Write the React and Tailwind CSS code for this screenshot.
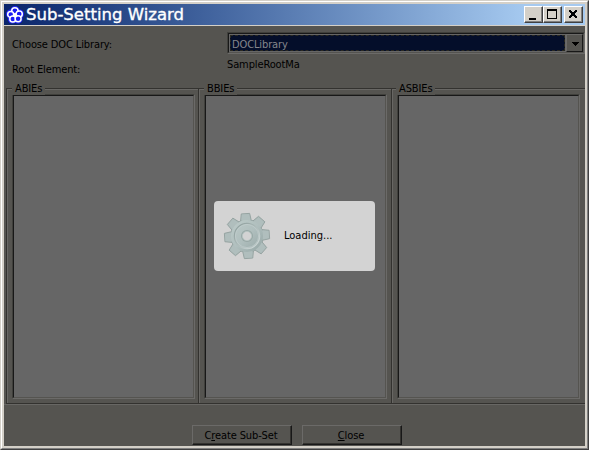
import React from "react";

function AppIcon() {
  return (
    <svg width="18" height="18" viewBox="0 0 18 18" className="shrink-0">
      <g fill="#2424ff">
        <circle cx="9" cy="4.8" r="4.8" />
        <circle cx="4.6" cy="8" r="4.6" />
        <circle cx="13.4" cy="8" r="4.6" />
        <circle cx="6.4" cy="13" r="4.6" />
        <circle cx="12" cy="13" r="4.6" />
      </g>
      <g fill="#1a1af4" stroke="#fff" strokeWidth="1.5">
        <circle cx="8.9" cy="4.9" r="3.2" />
        <circle cx="4.7" cy="8.4" r="3" />
        <circle cx="13.2" cy="8" r="3.1" />
        <circle cx="6.8" cy="12.9" r="3" />
        <circle cx="12.1" cy="12.7" r="3" />
      </g>
      <path d="M7.4 7.6l3 3M10.6 7.6l-3 3" stroke="#fff" strokeWidth="1.5" />
    </svg>
  );
}

function TitleButton({ children, className = "" }) {
  return (
    <div
      className={
        "h-[17px] border border-t-white border-l-white border-r-[#404040] border-b-[#404040] bg-[#d4d0c8] shadow-[inset_-1px_-1px_0_#808080] " +
        className
      }
    >
      <svg width="17" height="15" viewBox="0 0 17 15" shapeRendering="crispEdges">
        {children}
      </svg>
    </div>
  );
}

function Group({ label, className, labelClass = "left-[5px]" }) {
  return (
    <fieldset className={"relative h-[316px] border-l border-t border-b border-[#33322f] " + className}>
      <div className="h-full border-t border-l border-[#686764] pl-[4px] pt-[4px]">
        <div className="h-[305px] w-[183px] border border-t-[#40403c] border-l-[#40403c] border-r-[#6b6a68] border-b-[#6b6a68]">
          <div className="h-full border border-t-[#181818] border-l-[#181818] border-r-[#555450] border-b-[#555450] bg-[#666]" />
        </div>
      </div>
      <span className={"absolute top-[-7px] bg-[#555450] px-[3px] leading-[13px] " + labelClass}>{label}</span>
    </fieldset>
  );
}

function PushButton({ children }) {
  return (
    <div className="h-[20px] w-[100px] border border-t-[#6b6a68] border-l-[#6b6a68] border-r-[#181818] border-b-[#181818] pr-[2px] text-center leading-[19px] shadow-[inset_-1px_-1px_0_#33322f]">
      {children}
    </div>
  );
}

const TEETH = [-4, 41, 86, 131, 176, 221, 266, 311];

function Gear() {
  return (
    <svg width="48" height="48" viewBox="-24 -24 48 48" className="shrink-0">
      <defs>
        <linearGradient id="metal" x1="0" y1="0" x2="1" y2="1">
          <stop offset="0" stopColor="#bdcbc9" />
          <stop offset="0.5" stopColor="#b0bfbe" />
          <stop offset="1" stopColor="#94a5a4" />
        </linearGradient>
        <linearGradient id="ring" x1="0" y1="0" x2="1" y2="1">
          <stop offset="0" stopColor="#879896" />
          <stop offset="1" stopColor="#d5dfde" />
        </linearGradient>
      </defs>
      <g fill="#a9b7b6" stroke="#93a19f" strokeWidth="0.9">
        {TEETH.map((a) => (
          <path key={a} transform={`rotate(${a})`} d="M-5.4 -15L-4.2 -22.4H4.2L5.4 -15Z" />
        ))}
        <circle r="16.4" />
      </g>
      <g fill="#b0bebd">
        {TEETH.map((a) => (
          <path key={a} transform={`rotate(${a})`} d="M-4.8 -14L-3.6 -21.8H3.6L4.8 -14Z" />
        ))}
      </g>
      <circle r="16" fill="url(#metal)" />
      <circle r="12.6" fill="none" stroke="url(#ring)" strokeWidth="1.3" />
      <circle r="11.6" fill="none" stroke="#c3cfce" strokeWidth="0.7" />
      <circle r="6" fill="#98a8a6" />
      <circle r="4.6" fill="#d3d3d3" stroke="#b9c6c4" strokeWidth="0.8" />
    </svg>
  );
}

export default function App() {
  return (
    <div className="relative h-[450px] w-[589px] overflow-hidden border border-t-[#d4d0c8] border-l-[#d4d0c8] border-r-[#404040] border-b-[#404040] font-['DejaVu_Sans_Condensed','DejaVu_Sans',sans-serif] text-[11px] tracking-[-0.12px] text-black">
      <div className="h-full border border-t-white border-l-white border-r-[#808080] border-b-[#808080]">
        <div className="flex h-full flex-col border-2 border-[#d4d0c8] bg-[#555450]">
          <header className="flex h-[22px] shrink-0 items-center border-b border-[#d4d0c8] bg-linear-to-r from-[#0a246a] to-[#a6caf0] to-90% pl-[2px] pr-[2px]">
            <AppIcon />
            <h1 className="ml-[2px] flex-1 whitespace-nowrap pt-px font-['DejaVu_Sans',sans-serif] text-[16.5px] leading-[20px] tracking-normal text-white [-webkit-text-stroke:0.35px_white]">Sub-Setting Wizard</h1>
            <TitleButton className="w-[19px]">
              <path d="M4 11h7v2H4z" />
            </TitleButton>
            <TitleButton className="w-[19px]">
              <path fillRule="evenodd" d="M3 2h10v10H3zM4 4v7h8V4z" />
            </TitleButton>
            <TitleButton className="ml-[2px] w-[19px]">
              <path d="M4 3h2v1h-2zM10 3h2v1h-2zM4 4h3v1H4zM9 4h3v1H9zM5 5h6v1H5zM6 6h4v2H6zM5 8h6v1H5zM4 9h3v1H4zM9 9h3v1H9zM4 10h2v1H4zM10 10h2v1h-2z" />
            </TitleButton>
          </header>
          <div className="flex h-[62px] shrink-0 pl-2 leading-[13px]">
            <div className="w-[215px] shrink-0 pt-3">
              <div>Choose DOC Library:</div>
              <div className="mt-3">Root Element:</div>
            </div>
            <div className="flex-1 pt-[6px]">
              <div className="flex h-[22px] border border-t-[#40403c] border-l-[#40403c] border-r-[#6b6a68] border-b-[#6b6a68]">
                <div className="flex flex-1 border border-t-[#181818] border-l-[#181818] border-r-[#555450] border-b-[#555450] bg-[#666] p-px">
                  <div className="flex-1 border border-dashed border-[#292820] bg-[#040e2a] pl-px leading-[17px] text-[#85868c]">DOCLibrary</div>
                  <div className="-my-px -mr-px ml-px flex w-[17px] items-center justify-center border border-t-[#6b6a68] border-l-[#6b6a68] border-r-[#181818] border-b-[#181818] bg-[#555450] pl-px pt-[2px]">
                    <svg width="7" height="4" shapeRendering="crispEdges">
                      <path d="M0 0h7v1H6v1H5v1H4v1H3V3H2V2H1V1H0z" />
                    </svg>
                  </div>
                </div>
              </div>
              <div className="mt-[4px]">SampleRootMa</div>
            </div>
          </div>
          <main className="flex shrink-0 pl-[2px]">
            <Group label="ABIEs" className="w-[192px]" />
            <Group label="BBIEs" className="w-[193px]" />
            <Group label="ASBIEs" className="flex-1" labelClass="left-[4px]" />
          </main>
          <footer className="flex gap-[10px] border-t border-[#686764] pl-[188px] pt-[20px]">
            <PushButton>C<u>r</u>eate Sub-Set</PushButton>
            <PushButton><u>C</u>lose</PushButton>
          </footer>
        </div>
      </div>
      <div className="absolute left-[213px] top-[200px] flex h-[70px] w-[161px] items-center rounded bg-[#d3d3d3] pl-[9px]">
        <Gear />
        <span className="ml-[13px] tracking-normal">Loading...</span>
      </div>
    </div>
  );
}
